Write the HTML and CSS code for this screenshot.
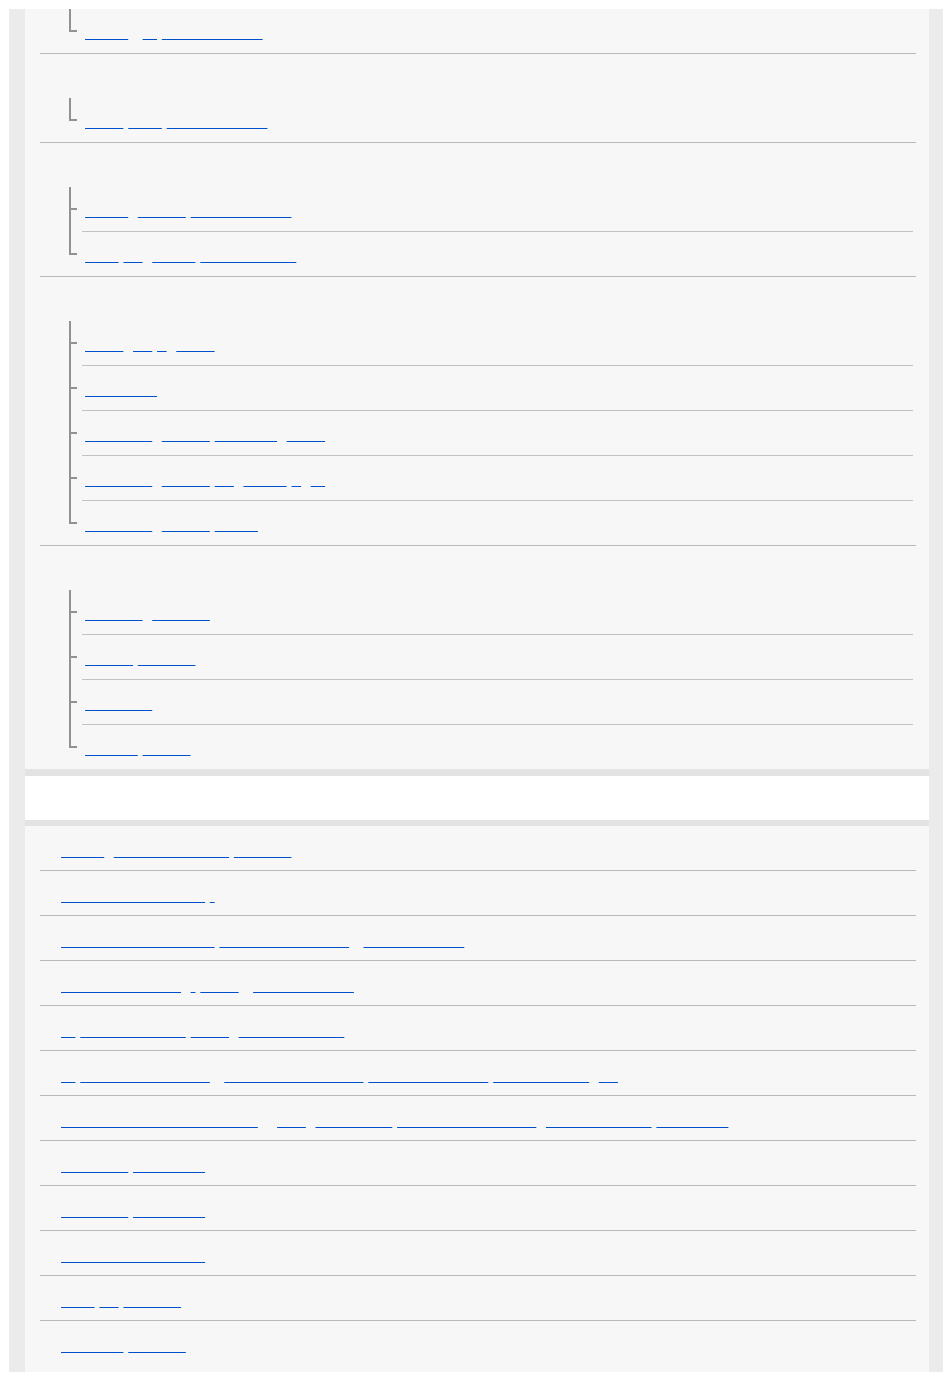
FILE: index.html
```html
<!DOCTYPE html>
<html lang="en">
<head>
<meta charset="utf-8">
<title>Help Guide</title>
<link rel="stylesheet" href="styles.css">
</head>
<body>
<div class="frame">
  <div class="panel">
    <ul class="sections">
      <li class="section">
        <ul class="tree">
          <li><a class="lnk" href="#"><span class="u">Connected</span>   <span class="u">via</span> <span class="u">smartphone-app-remote</span></a></li>
        </ul>
      </li>
      <li class="section">
        <div class="head">Shooting remotely</div>
        <ul class="tree">
          <li><a class="lnk" href="#"><span class="u">Shooting</span> <span class="u">control</span> <span class="u">smartphone-operations</span></a></li>
        </ul>
      </li>
      <li class="section">
        <div class="head">Transferring images</div>
        <ul class="tree">
          <li><a class="lnk" href="#"><span class="u">Transfers</span>  <span class="u">Smartphone</span> <span class="u">automatic-transfer-on</span></a></li>
          <li><a class="lnk" href="#"><span class="u">Sending</span> <span class="u">file</span>  <span class="u">selection</span> <span class="u">to-smartphone-device</span></a></li>
        </ul>
      </li>
      <li class="section">
        <div class="head">Connecting to a computer</div>
        <ul class="tree">
          <li><a class="lnk" href="#"><span class="u">Computer</span>  <span class="u">link</span> <span class="u">PC</span>  <span class="u">settings</span></a></li>
          <li><a class="lnk" href="#"><span class="u">Importing-image</span></a></li>
          <li><a class="lnk" href="#"><span class="u">Remote-capture</span>  <span class="u">connection</span> <span class="u">via-USB-cable</span>  <span class="u">tethered</span></a></li>
          <li><a class="lnk" href="#"><span class="u">Remote-capture</span>  <span class="u">connection</span> <span class="u">over</span>  <span class="u">Wi-Fi-LAN</span> <span class="u">on</span>  <span class="u">net</span></a></li>
          <li><a class="lnk" href="#"><span class="u">Remote-capture</span>  <span class="u">PC-setting</span> <span class="u">functions</span></a></li>
        </ul>
      </li>
      <li class="section">
        <div class="head">Live streaming</div>
        <ul class="tree">
          <li><a class="lnk" href="#"><span class="u">Live-streams</span>  <span class="u">via-USB-port</span></a></li>
          <li><a class="lnk" href="#"><span class="u">Live-video</span> <span class="u">output-image</span></a></li>
          <li><a class="lnk" href="#"><span class="u">Video-settings</span></a></li>
          <li><a class="lnk" href="#"><span class="u">Audio-level</span> <span class="u">monitoring</span></a></li>
        </ul>
      </li>
    </ul>
  </div>
  <div class="band">Appendix</div>
  <div class="panel panel2">
    <ul class="list">
      <li><a class="lnk" href="#"><span class="u">Important</span>  <span class="u">notes-about-using-camera</span> <span class="u">cleaning-the</span></a></li>
      <li><a class="lnk" href="#"><span class="u">Specifications-of-this-product</span> <span class="u">1</span></a></li>
      <li><a class="lnk" href="#"><span class="u">Trademarks-and-licences-for-this</span> <span class="u">software-used-in-the-camera</span>   <span class="u">notes-on-open-sources</span></a></li>
      <li><a class="lnk" href="#"><span class="u">Troubleshooting-questions</span>  <span class="u">A</span> <span class="u">messages</span>   <span class="u">self-diagnosis-screen</span></a></li>
      <li><a class="lnk" href="#"><span class="u">The</span> <span class="u">list-of-default-values</span> <span class="u">for-each</span>  <span class="u">setting-item-on-camera</span></a></li>
      <li><a class="lnk" href="#"><span class="u">Can</span> <span class="u">number-of-recordable-images</span>   <span class="u">and-recordable-movie-duration</span> <span class="u">with-various-memory-cards</span> <span class="u">and-battery-capacity</span>  <span class="u">info</span></a></li>
      <li><a class="lnk" href="#"><span class="u">Using-the-camera-abroad-and-power-sources</span>    <span class="u">travel</span>  <span class="u">voltage-settings</span> <span class="u">electrical-outlets-by-country</span>  <span class="u">and-regions-of-the-map</span> <span class="u">TV-color-system</span></a></li>
      <li><a class="lnk" href="#"><span class="u">Other-features</span> <span class="u">and-information</span></a></li>
      <li><a class="lnk" href="#"><span class="u">Camera-battery</span> <span class="u">charging-method</span></a></li>
      <li><a class="lnk" href="#"><span class="u">Customer-support-website-links</span></a></li>
      <li><a class="lnk" href="#"><span class="u">Notices</span> <span class="u">from</span> <span class="u">manufacturer</span></a></li>
      <li><a class="lnk" href="#"><span class="u">Compatibility</span> <span class="u">with-lenses.</span></a></li>
    </ul>
  </div>
</div>
</body>
</html>
```
FILE: styles.css
```css
html {
  background: #ffffff;
}

body {
  margin: 9px 7px 7px 9px;
  font-family: "Liberation Sans", Arial, sans-serif;
}

.frame {
  background: #ebebeb;
  padding: 0 14px 0 16px;
}

.panel {
  background: #f7f7f7;
  padding: 0 13px 0 15px;
}

.panel2 {
  padding-bottom: 7px;
}

.sections,
.tree,
.list {
  list-style: none;
  margin: 0;
  padding: 0;
}

.section {
  border-bottom: 1px solid #b9b9b9;
}

.section:last-child {
  border-bottom: none;
}

.head {
  height: 44px;
  color: transparent;
  font-size: 15px;
  line-height: 44px;
  padding-left: 21px;
}

.tree {
  margin: 0 3px 0 42px;
}

.tree li {
  position: relative;
  height: 44px;
  border-bottom: 1px solid #c2c2c2;
}

.tree li:last-child {
  border-bottom: none;
}

.tree li::before {
  content: "";
  position: absolute;
  left: -13px;
  top: 0;
  bottom: -1px;
  width: 2px;
  background: #929292;
}

.tree li:last-child::before {
  bottom: auto;
  height: 23px;
}

.tree li::after {
  content: "";
  position: absolute;
  left: -13px;
  top: 21px;
  width: 8px;
  height: 2px;
  background: #929292;
}

.lnk {
  display: block;
  padding: 21px 0 0 3px;
  font-family: "Liberation Mono", monospace;
  font-size: 8px;
  line-height: 10px;
  color: transparent;
  white-space: pre;
  text-decoration: none;
}

.u {
  text-decoration-line: underline;
  text-decoration-color: #0052cc;
  text-decoration-thickness: 1px;
  text-underline-offset: 2px;
  text-decoration-skip-ink: none;
}

.band {
  height: 44px;
  background: #ffffff;
  border-top: 7px solid #e3e3e3;
  border-bottom: 6px solid #e3e3e3;
  color: transparent;
  font-size: 15px;
  line-height: 44px;
}

.list li {
  height: 44px;
  border-bottom: 1px solid #b9b9b9;
}

.list li:last-child {
  border-bottom: none;
}

.list .lnk {
  padding: 22px 0 0 21px;
}
```
